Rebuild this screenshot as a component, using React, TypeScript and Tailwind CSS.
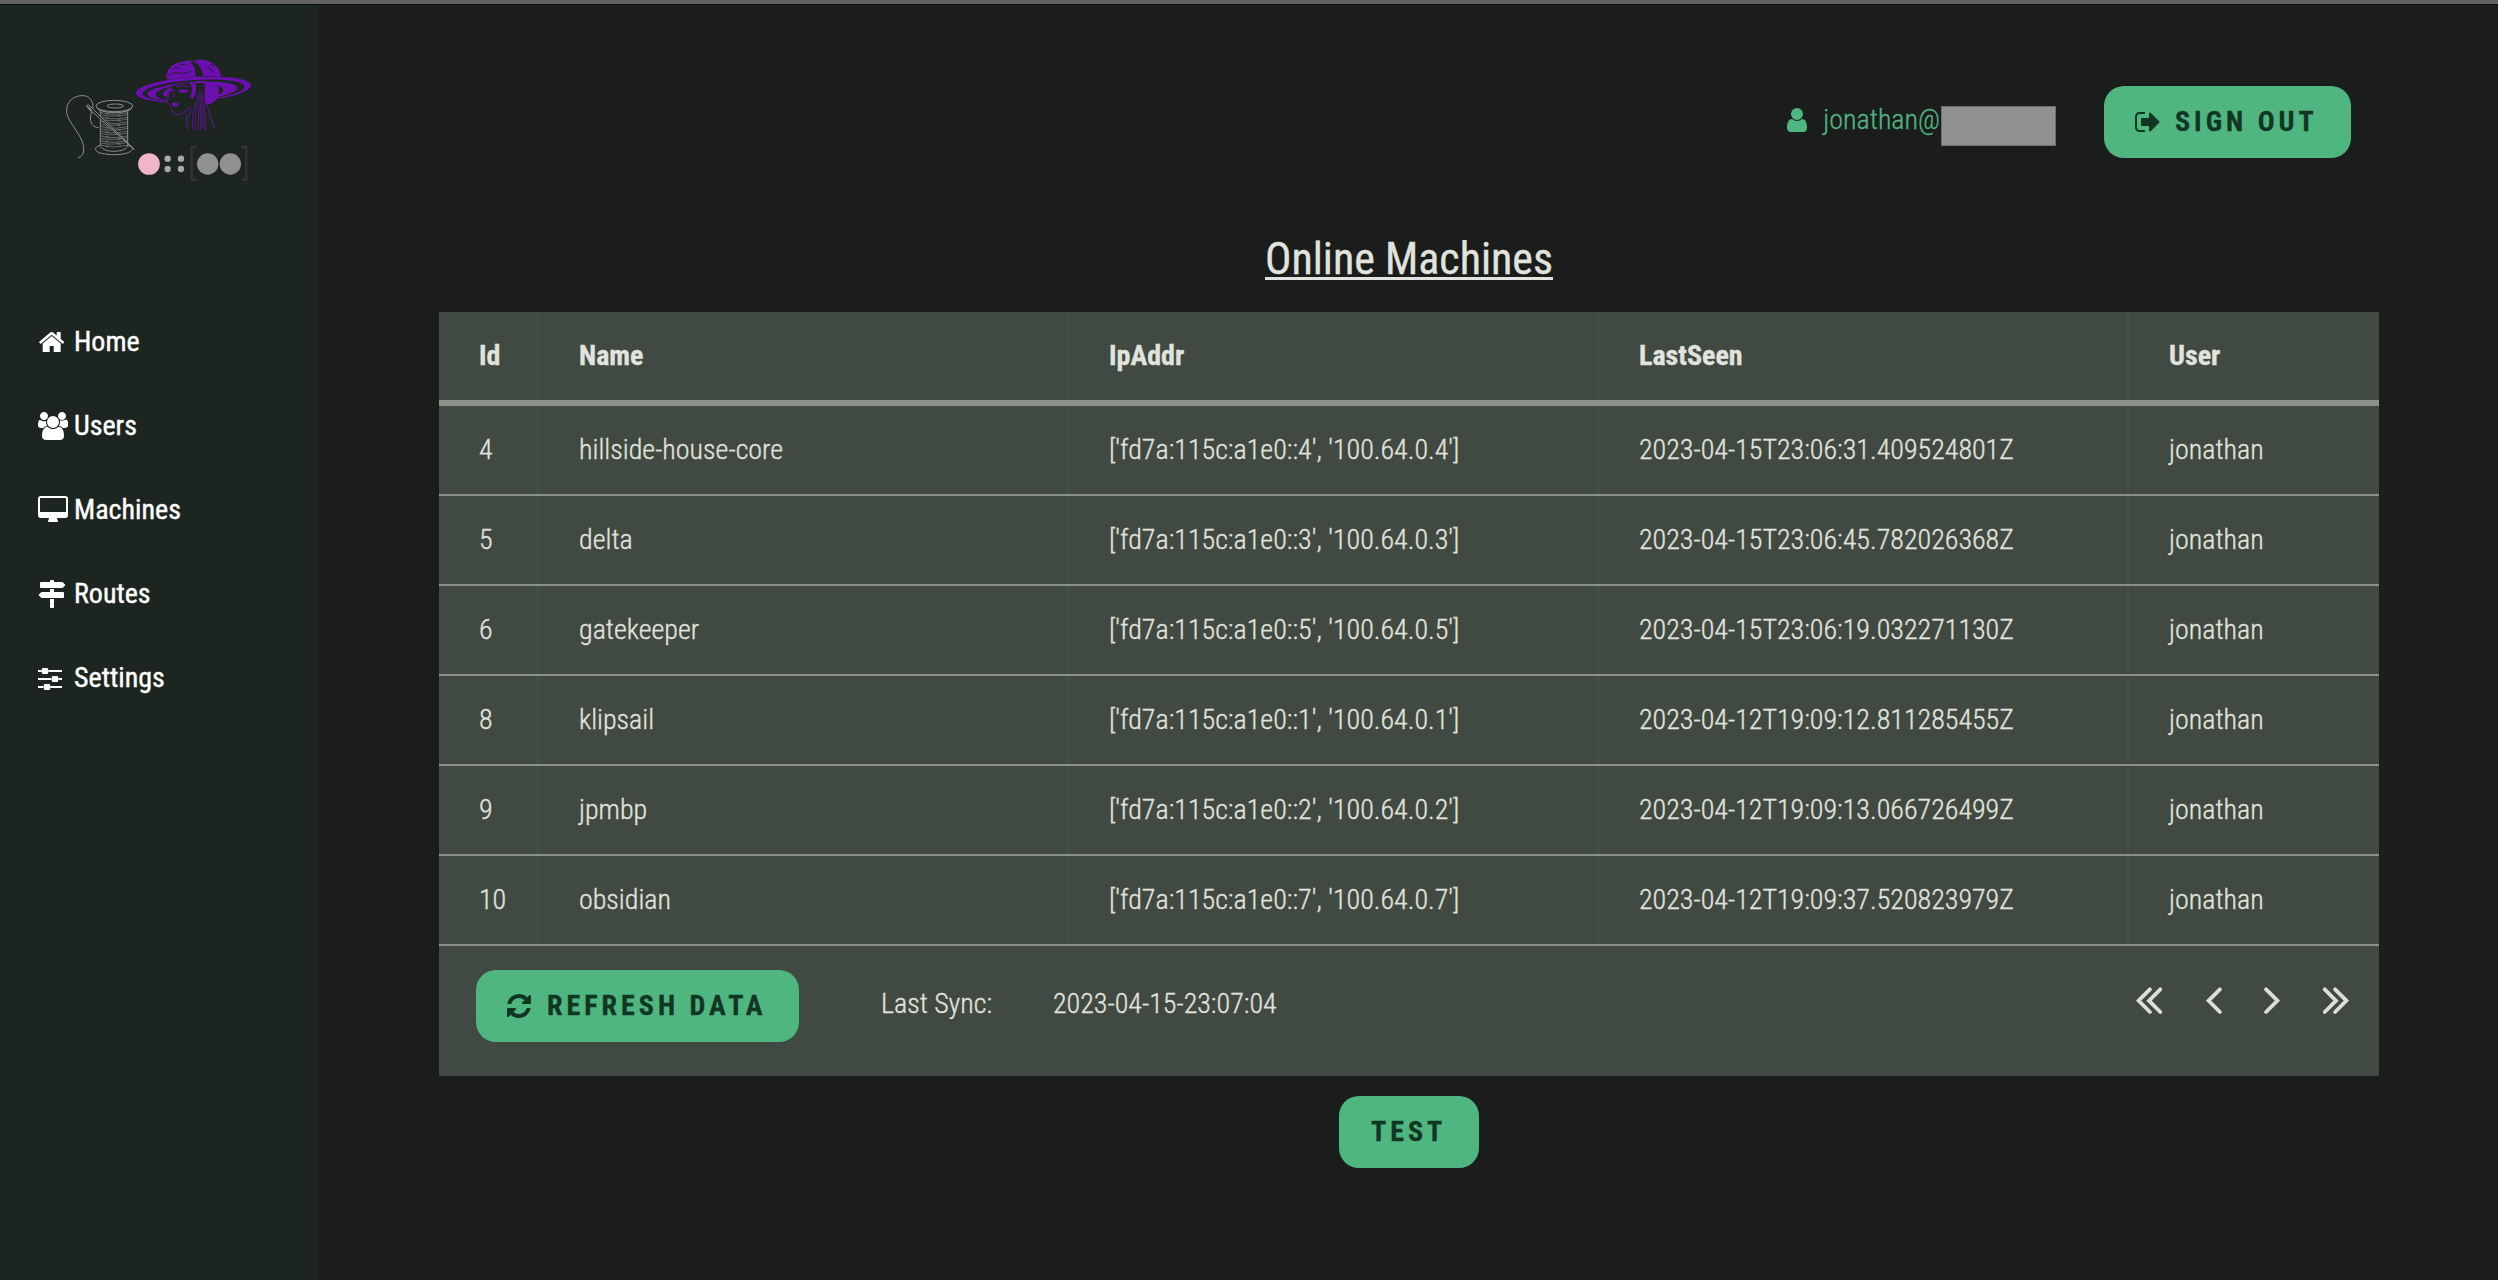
import React from "react";

type IconProps = { className: string; viewBox: string; d: string };

function Icon({ className, viewBox, d }: IconProps) {
  return (
    <svg className={`block shrink-0 fill-current ${className}`} viewBox={viewBox}>
      <path d={d} />
    </svg>
  );
}

const HOME =
  "M1472 992v480q0 26-19 45t-45 19h-384v-384h-256v384h-384q-26 0-45-19t-19-45v-480q0-1 .5-3t.5-3l575-474 575 474q1 2 1 6zm223-69l-62 74q-8 9-21 11h-3q-13 0-21-7l-692-577-692 577q-12 8-24 7-13-2-21-11l-62-74q-8-10-7-23.5t11-21.5l719-599q32-26 76-26t76 26l244 204v-195q0-14 9-23t23-9h192q14 0 23 9t9 23v408l219 182q10 8 11 21.5t-7 23.5z";
const USERS =
  "M657 896q-162 5-265 128h-134q-82 0-138-40.5t-56-118.5q0-353 124-353 6 0 43.5 21t97.5 42.5 119 21.5q67 0 133-23-5 37-5 66 0 159 90 296zm1071 637q0 120-73 189.5t-194 69.5h-874q-121 0-194-69.5t-73-189.5q0-53 3.5-103.5t14-109 26.5-108.5 43-97.5 62-81 85.5-53.5 111.5-20q10 0 43 21.5t73 48 107 48 135 21.5 135-21.5 107-48 73-48 43-21.5q61 0 111.5 20t85.5 53.5 62 81 43 97.5 26.5 108.5 14 109 3.5 103.5zm-1024-1277q0 106-75 181t-181 75-181-75-75-181 75-181 181-75 181 75 75 181zm704 384q0 159-112.5 271.5t-271.5 112.5-271.5-112.5-112.5-271.5 112.5-271.5 271.5-112.5 271.5 112.5 112.5 271.5zm576 225q0 78-56 118.5t-138 40.5h-134q-103-123-265-128 90-137 90-296 0-29-5-66 66 23 133 23 59 0 119-21.5t97.5-42.5 43.5-21q124 0 124 353zm-128-609q0 106-75 181t-181 75-181-75-75-181 75-181 181-75 181 75 75 181z";
const DESKTOP =
  "M1792 992v-832q0-13-9.5-22.5t-22.5-9.5h-1600q-13 0-22.5 9.5t-9.5 22.5v832q0 13 9.5 22.5t22.5 9.5h1600q13 0 22.5-9.5t9.5-22.5zm128-832v1088q0 66-47 113t-113 47h-544q0 37 16 77.5t32 71 16 43.5q0 26-19 45t-45 19h-512q-26 0-45-19t-19-45q0-14 16-44t32-70 16-78h-544q-66 0-113-47t-47-113v-1088q0-66 47-113t113-47h1600q66 0 113 47t47 113z";
const SIGNS =
  "M1745 297q10 10 10 23t-10 23l-141 141q-28 28-68 28h-1344q-26 0-45-19t-19-45v-256q0-26 19-45t45-19h576v-64q0-26 19-45t45-19h128q26 0 45 19t19 45v64h512q40 0 68 28zm-977 919h256v512q0 26-19 45t-45 19h-128q-26 0-45-19t-19-45v-512zm832-448q26 0 45 19t19 45v256q0 26-19 45t-45 19h-1344q-40 0-68-28l-141-141q-10-10-10-23t10-23l141-141q28-28 68-28h512v-192h256v192h576z";
const SLIDERS =
  "M0 6h3.6v2H0zM10.4 6H24v2H10.4zM5 4h4a1.2 1.2 0 0 1 1.2 1.2v3.6A1.2 1.2 0 0 1 9 10H5a1.2 1.2 0 0 1-1.2-1.2V5.2A1.2 1.2 0 0 1 5 4zM0 14h13.4v2H0zM20.4 14H24v2h-3.6zM15 12h4a1.2 1.2 0 0 1 1.2 1.2v3.6A1.2 1.2 0 0 1 19 18h-4a1.2 1.2 0 0 1-1.2-1.2v-3.6A1.2 1.2 0 0 1 15 12zM0 22h5.4v2H0zM12.4 22H24v2H12.4zM7 20h4a1.2 1.2 0 0 1 1.2 1.2v3.6A1.2 1.2 0 0 1 11 26H7a1.2 1.2 0 0 1-1.2-1.2v-3.6A1.2 1.2 0 0 1 7 20z";
const USER =
  "M1536 1399q0 109-62.5 187t-150.5 78h-854q-88 0-150.5-78t-62.5-187q0-85 8.5-160.5t31.5-152 58.5-131 94-89 134.5-34.5q131 128 313 128t313-128q76 0 134.5 34.5t94 89 58.5 131 31.5 152 8.5 160.5zm-256-887q0 159-112.5 271.5t-271.5 112.5-271.5-112.5-112.5-271.5 112.5-271.5 271.5-112.5 271.5 112.5 112.5 271.5z";
const SIGN_OUT =
  "M704 1440q0 4 1 20t.5 26.5-3 23.5-10 19.5-20.5 6.5h-320q-119 0-203.5-84.5t-84.5-203.5v-704q0-119 84.5-203.5t203.5-84.5h320q13 0 22.5 9.5t9.5 22.5q0 4 1 20t.5 26.5-3 23.5-10 19.5-20.5 6.5h-320q-66 0-113 47t-47 113v704q0 66 47 113t113 47h312l11.5 1 11.5 3 8 5.5 7 9 2 13.5zm928-544q0 26-19 45l-544 544q-19 19-45 19t-45-19-19-45v-288h-448q-26 0-45-19t-19-45v-384q0-26 19-45t45-19h448v-288q0-26 19-45t45-19 45 19l544 544q19 19 19 45z";
const REFRESH =
  "M1639 1056q0 5-1 7-64 268-268 434.5t-478 166.5q-146 0-282.5-55t-243.5-157l-129 129q-19 19-45 19t-45-19-19-45v-448q0-26 19-45t45-19h448q26 0 45 19t19 45-19 45l-137 137q71 66 161 102t187 36q134 0 250-65t186-179q11-17 53-117 8-23 30-23h192q13 0 22.5 9.5t9.5 22.5zm25-800v448q0 26-19 45t-45 19h-448q-26 0-45-19t-19-45 19-45l138-138q-148-137-349-137-134 0-250 65t-186 179q-11 17-53 117-8 23-30 23h-199q-13 0-22.5-9.5t-9.5-22.5v-7q65-268 270-434.5t480-166.5q146 0 284 55.5t245 156.5l130-129q19-19 45-19t45 19 19 45z";

const NAV = [
  { label: "Home", icon: <Icon className="h-[28px] w-[28px]" viewBox="20 0 1792 1792" d={HOME} /> },
  { label: "Users", icon: <Icon className="h-[28px] w-[30px]" viewBox="64 0 1920 1792" d={USERS} /> },
  { label: "Machines", icon: <Icon className="h-[28px] w-[30px]" viewBox="0 0 1920 1792" d={DESKTOP} /> },
  { label: "Routes", icon: <Icon className="h-[28px] w-[28px]" viewBox="0 0 1792 1792" d={SIGNS} /> },
  { label: "Settings", icon: <Icon className="h-[28px] w-[24px]" viewBox="0 0 24 28" d={SLIDERS} /> },
];

const ROWS = [
  ["4", "hillside-house-core", "['fd7a:115c:a1e0::4', '100.64.0.4']", "2023-04-15T23:06:31.409524801Z", "jonathan"],
  ["5", "delta", "['fd7a:115c:a1e0::3', '100.64.0.3']", "2023-04-15T23:06:45.782026368Z", "jonathan"],
  ["6", "gatekeeper", "['fd7a:115c:a1e0::5', '100.64.0.5']", "2023-04-15T23:06:19.032271130Z", "jonathan"],
  ["8", "klipsail", "['fd7a:115c:a1e0::1', '100.64.0.1']", "2023-04-12T19:09:12.811285455Z", "jonathan"],
  ["9", "jpmbp", "['fd7a:115c:a1e0::2', '100.64.0.2']", "2023-04-12T19:09:13.066726499Z", "jonathan"],
  ["10", "obsidian", "['fd7a:115c:a1e0::7', '100.64.0.7']", "2023-04-12T19:09:37.520823979Z", "jonathan"],
];

const THREAD_LINES = Array.from({ length: 15 }, (_, i) => i);

function Logo() {
  return (
    <svg className="block h-[160px] w-[240px]" viewBox="0 0 720 480" fill="none">
      {/* spool of thread with a needle */}
      <g stroke="#8b918d" strokeWidth="3">
        <path d="M114 353C134 350 136 322 122 294 100 254 78 236 80 208 84 168 128 160 146 172 166 190 158 208 152 226 148 250 160 262 176 263" />
        <ellipse cx="223" cy="198" rx="55" ry="17" />
        <ellipse cx="226" cy="198" rx="25" ry="6" />
        <path d="M170 203q10 14 53 15 45-1 53-15" />
        <path d="M181 210V318M263 210V318" />
        <path d="M181 316C160 322 162 334 184 340 210 346 240 345 258 340 284 332 282 322 263 316" />
        <path d="M181 320q12 14 41 14 30 0 41-14" />
        <g strokeWidth="2">
          {THREAD_LINES.map((i) => (
            <path
              key={i}
              d={
                i % 2
                  ? `M184 ${218 + i * 7}q20 5 38 3t20 3M232 ${219 + i * 7}q16 2 30-3`
                  : `M182 ${217 + i * 7}q10 4 24 3M196 ${222 + i * 7}q34 3 66-4`
              }
            />
          ))}
        </g>
      </g>
      <path d="M139 197q6-5 13 3l132 129-124-111q-17-10-21-21z" fill="#1d2520" stroke="#8b918d" strokeWidth="3" />
      <path d="M145 201l10 12" stroke="#8b918d" strokeWidth="4" />

      {/* woman in a wide-brimmed hat */}
      <path d="M379 118C377 84 400 68 436 64 446 58 462 66 470 60 490 58 508 62 518 72 534 80 544 96 543 116z" fill="#6d0fb0" />
      <path d="M450 66C464 78 468 92 466 110L490 110C488 90 478 74 462 64z" fill="#1d2520" />
      <path d="M386 108q14-14 34-8 18 4 34-8M396 88q10-8 20-4M418 76q10-6 18-2M504 84q14 4 18 14M510 74q10 2 14 8" stroke="#1d2520" strokeWidth="3" />
      <g transform="rotate(-4 460 148)">
        <ellipse cx="460" cy="149" rx="173" ry="39" fill="#1d2520" />
        <ellipse cx="460" cy="148" rx="173" ry="37" fill="#6d0fb0" />
        <ellipse cx="460" cy="151" rx="153" ry="31" fill="#1d2520" />
        <ellipse cx="457" cy="153" rx="136" ry="27" fill="#6d0fb0" />
        <ellipse cx="448" cy="156" rx="102" ry="25" fill="#1d2520" />
        <path d="M368 160C366 146 390 136 420 133 460 130 510 134 536 146L532 156C500 140 440 136 404 144L386 154 384 168z" fill="#6d0fb0" />
      </g>
      <path d="M384 146C400 128 480 124 498 132L500 200 400 222 394 196 382 186z" fill="#1d2520" />
      <path d="M494 126C530 126 544 146 534 168 526 190 508 196 494 190z" fill="#6d0fb0" />
      <path d="M464 124L494 122 494 128 466 130z" fill="#6d0fb0" />
      <path d="M448 130C462 124 470 130 468 150 464 180 454 180 450 168 460 156 458 142 448 130z" fill="#6d0fb0" />
      <path d="M384 146q8-4 18 4-10 8-18 4zM414 153q16-11 34 0-16 9-34 2z" fill="#6d0fb0" />
      <path d="M396 190q10-6 22 2-10 14-22 4z" fill="#6d0fb0" />
      <g stroke="#6d0fb0">
        <path
          strokeWidth="2.6"
          d="M386 140q-2 16 0 24 0 8-4 14-6 10 4 14 8 4 8 12 0 6 4 12 4 8 14 8 14-2 24-10 10-6 16-16M410 142q18-10 36 0M404 152q-6 14-2 20M438 222q6 26 4 48M500 190q10 40 24 76"
        />
        <path
          strokeWidth="2.4"
          d="M464 192C460 220 456 230 458 270M470 192C466 220 466 240 466 272M476 190C478 220 474 240 474 270M482 190C480 220 484 240 482 272M488 192C488 220 492 240 488 266M494 192C492 220 500 240 496 272M452 208q-2 20-12 28"
        />
        <path strokeWidth="3" strokeDasharray="4 3" d="M466 188H494" />
        <path strokeWidth="2.5" d="M480 148v12M473 164h14v18h-14zM477 168v10M483 168v10" />
      </g>

      {/* dots and brackets */}
      <circle cx="327" cy="372" r="32.5" fill="#f0b4cb" />
      <g fill="#a8aaa9">
        <circle cx="383" cy="356" r="9.5" />
        <circle cx="423" cy="356" r="9.5" />
        <circle cx="383" cy="387" r="9.5" />
        <circle cx="423" cy="387" r="9.5" />
      </g>
      <circle cx="503" cy="372" r="32" fill="#909090" />
      <circle cx="571" cy="372" r="32" fill="#909090" />
      <path d="M470 321H455V419H470M604 321H619V419H604" stroke="#333534" strokeWidth="7" />
    </svg>
  );
}

function Button({ className, children }: { className: string; children: React.ReactNode }) {
  return (
    <button
      className={`flex h-[72px] items-center rounded-[20px] bg-[#50b680] text-[28px] leading-none font-bold tracking-[4px] whitespace-nowrap text-[#113624] ${className}`}
    >
      {children}
    </button>
  );
}

function Chevron({ double, flip }: { double?: boolean; flip?: boolean }) {
  return (
    <svg
      className={`block h-[28px] ${double ? "w-[26px]" : "w-[16px]"} ${flip ? "-scale-x-100" : ""}`}
      viewBox={double ? "0 0 26 28" : "0 0 16 28"}
      fill="none"
      stroke="#dcdedb"
      strokeWidth="3.8"
      strokeLinecap="round"
    >
      <path d="M13.9 2.3L2.6 13.7 13.9 25" />
      {double && <path d="M24.3 2.3L13 13.7 24.3 25" />}
    </svg>
  );
}

const GRID = "grid grid-cols-[100px_530px_530px_530px_250px]";

export default function App() {
  return (
    <div className="flex h-[1280px] w-[2498px] flex-col overflow-hidden bg-[#1b1d1c] font-['Roboto_Condensed','Roboto',sans-serif] text-[28px] font-light text-[#e1e4de] [-webkit-text-stroke:0.3px]">
      <div className="h-[5px] shrink-0 border-b border-[#0c0d0c] bg-[#636363]" />
      <div className="flex flex-1">
        <aside className="w-[318px] shrink-0 bg-[#1d2520]">
          <div className="pt-[35px] pl-[40px]">
            <Logo />
          </div>
          <nav className="flex flex-col pt-[100px] pl-[38px]">
            {NAV.map((n) => (
              <a key={n.label} className="flex h-[84px] items-center font-normal text-white [-webkit-text-stroke:0.4px]">
                <span className="w-[36px]">{n.icon}</span>
                <span className="leading-none">{n.label}</span>
              </a>
            ))}
          </nav>
        </aside>

        <main className="flex flex-1 flex-col">
          <header className="mt-[81px] flex h-[72px] items-center justify-end pr-[147px]">
            <Icon className="mr-[16px] mb-[4px] h-[24px] w-[20px] text-[#50b680]" viewBox="256 128 1280 1536" d={USER} />
            <span className="mb-[4px] leading-none text-[#50b680]">jonathan@</span>
            <span className="mt-[8px] ml-px h-[40px] w-[115px] border border-[#6d6f6e] bg-[#919191]" />
            <Button className="ml-[48px] w-[247px] pl-[31px]">
              <Icon className="mr-[15px] h-[20px] w-[25px]" viewBox="64 256 1600 1280" d={SIGN_OUT} />
              SIGN OUT
            </Button>
          </header>

          <h1 className="mt-[72px] ml-[121px] flex h-[82px] w-[1940px] justify-center text-[44px] leading-[58px] font-normal">
            <span className="underline decoration-[3px] underline-offset-[3px]">Online Machines</span>
          </h1>

          <section className="ml-[121px] h-[764px] w-[1940px] bg-[#414a42]">
            <div className={`${GRID} h-[94px] border-b-[6px] border-[#8b9289] font-bold`}>
              {["Id", "Name", "IpAddr", "LastSeen", "User"].map((h) => (
                <div key={h} className="flex items-center border-r-2 border-[#445147] pl-[40px] leading-none last:border-r-0">
                  {h}
                </div>
              ))}
            </div>
            {ROWS.map((row) => (
              <div key={row[0]} className={`${GRID} h-[90px] border-b-2 border-[#8b9289]`}>
                {row.map((cell, i) => (
                  <div key={i} className="flex items-center border-r-2 border-[#445147] pl-[40px] leading-none last:border-r-0">
                    {cell}
                  </div>
                ))}
              </div>
            ))}
            <footer className="flex items-start pt-[24px] pl-[37px]">
              <Button className="w-[323px] pl-[31px]">
                <Icon className="mr-[16px] h-[24px] w-[24px]" viewBox="128 128 1536 1536" d={REFRESH} />
                REFRESH DATA
              </Button>
              <span className="mt-[20px] ml-[82px] w-[172px] leading-none">Last Sync:</span>
              <span className="mt-[20px] leading-none">2023-04-15-23:07:04</span>
              <div className="mt-[17px] mr-[30px] ml-auto flex">
                <Chevron double />
                <div className="ml-[44px]">
                  <Chevron />
                </div>
                <div className="ml-[42px]">
                  <Chevron flip />
                </div>
                <div className="ml-[43px]">
                  <Chevron double flip />
                </div>
              </div>
            </footer>
          </section>

          <Button className="mt-[20px] ml-[1021px] w-[140px] pl-[32px]">TEST</Button>
        </main>
      </div>
    </div>
  );
}
